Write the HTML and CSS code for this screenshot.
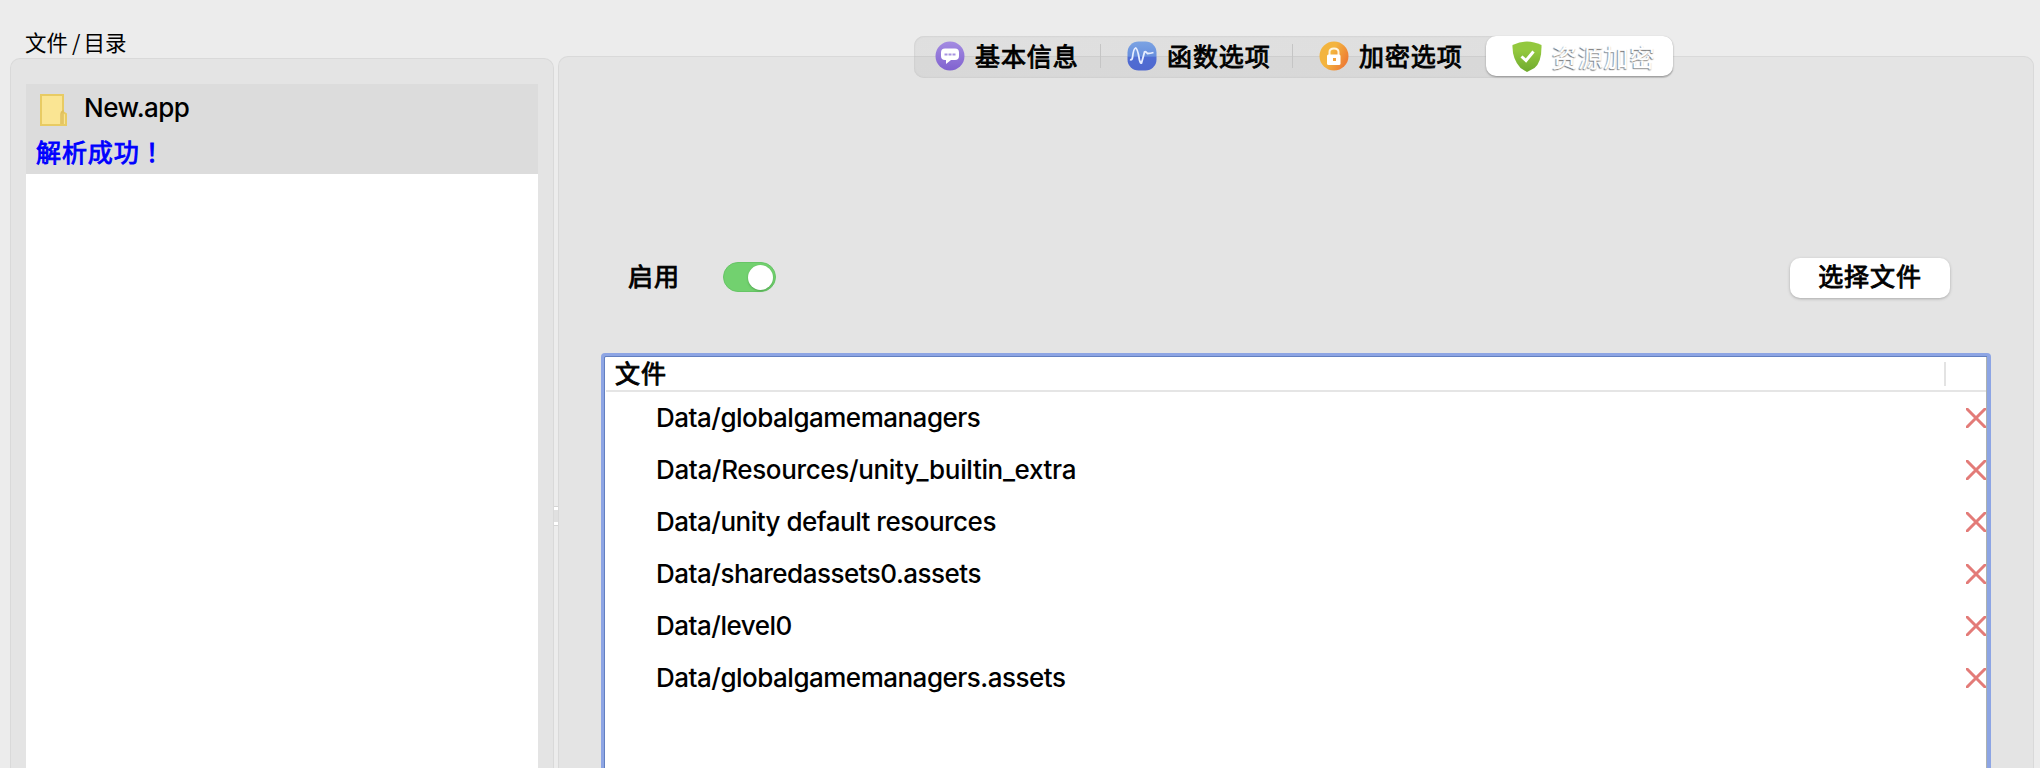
FILE: index.html
```html
<!DOCTYPE html>
<html lang="zh-CN">
<head>
<meta charset="utf-8">
<title>资源加密</title>
<link rel="stylesheet" href="styles.css">
</head>
<body>
<main class="window">
  <section class="sidebar">
    <h1 class="sidebar-title">文件<span class="slash">/</span>目录</h1>
    <div class="panel sidebar-panel">
      <div class="app-list">
        <div class="app-item">
          <div class="app-row">
            <svg class="folder" width="27" height="32" viewBox="0 0 27 32"><path d="M1 1h22v17l3 2v11H1z" fill="#fae593" stroke="#e8cb63" stroke-width="2"/><path d="M21 30V20q0-2 2-3v13" fill="#f3d67a" stroke="#dfbf5c" stroke-width="1.500"/></svg>
            <span class="app-name">New.app</span>
          </div>
          <div class="app-status">解析成功<span class="bang" lang="zh-TW">！</span></div>
        </div>
      </div>
    </div>
  </section>
  <div class="splitter"><div class="grip"></div></div>
  <section class="content">
    <nav class="tabs">
      <div class="tab tab-info">
        <svg width="30" height="30" viewBox="0 0 30 30"><defs><linearGradient id="p" x2="0" y2="1"><stop stop-color="#a48be2"/><stop offset="1" stop-color="#8062cf"/></linearGradient></defs><circle cx="15" cy="15" r="14.500" fill="url(#p)"/><path d="M10 7.500h10q4 0 4 4v3.500q0 4-4 4h-4l-5 4v-4h-1q-4 0-4-4v-3.500q0-4 4-4z" fill="#fff"/><path d="M9.500 13.500h11" stroke="#a793e0" stroke-width="1.800" stroke-dasharray="3 1"/></svg>
        <span>基本信息</span>
      </div>
      <i class="divider"></i>
      <div class="tab tab-func">
        <svg width="30" height="30" viewBox="0 0 30 30"><defs><linearGradient id="b" x2="0" y2="1"><stop stop-color="#7ba3e3"/><stop offset=".5" stop-color="#688fdd"/><stop offset=".55" stop-color="#506dd3"/><stop offset="1" stop-color="#5068cf"/></linearGradient></defs><rect x=".5" y=".5" width="29" height="29" rx="11" fill="url(#b)"/><path d="M3 18.500q2 1 2.500-2 1-9 3-9.500 2 0 4 12 1 4 2 3 2-7 3-11 1-1 3 1.500 3 0 6-1" fill="none" stroke="#e6edff" stroke-width="1.800"/></svg>
        <span>函数选项</span>
      </div>
      <i class="divider"></i>
      <div class="tab tab-crypt">
        <svg width="30" height="30" viewBox="0 0 30 30"><defs><linearGradient id="o" x2="1" y2=".5"><stop offset=".5" stop-color="#f3b43e"/><stop offset="1" stop-color="#ee7f35"/></linearGradient></defs><circle cx="15" cy="15" r="14.500" fill="url(#o)"/><path d="M10.500 14v-3q0-3.500 4.500-3.500t4.500 3.500v3" fill="none" stroke="#fff6df" stroke-width="2"/><rect x="8" y="13.500" width="13.500" height="10.500" rx="1.500" fill="#fff"/><rect x="14" y="17" width="3" height="3" fill="#f3a33b"/></svg>
        <span>加密选项</span>
      </div>
      <div class="tab tab-active">
        <svg width="30" height="31" viewBox="0 0 30 31"><defs><linearGradient id="g" x2="0" y2="1"><stop offset=".3" stop-color="#93c83e"/><stop offset="1" stop-color="#6faa2e"/></linearGradient></defs><path d="M15 .5Q22 .5 29.500 4q.5 17-7 23l-7.500 4-6.500-4Q0 18 .5 4 8 .5 15 .5z" fill="url(#g)"/><path d="M9.500 15.500l4.500 4 7.500-9" fill="none" stroke="#fff" stroke-width="3"/></svg>
        <span>资源加密</span>
      </div>
    </nav>
    <div class="panel content-panel">
      <div class="controls">
        <span class="enable">启用</span>
        <div class="toggle"><div class="knob"></div></div>
        <button class="choose">选择文件</button>
      </div>
      <div class="table">
        <div class="thead"><span>文件</span><i class="col-line"></i></div>
        <div class="row"><span>Data/globalgamemanagers</span><svg class="x" viewBox="0 0 20 20"><path d="M0 0L20 20M20 0L0 20"/></svg></div>
        <div class="row wide"><span>Data/Resources/unity_builtin_extra</span><svg class="x" viewBox="0 0 20 20"><path d="M0 0L20 20M20 0L0 20"/></svg></div>
        <div class="row"><span>Data/unity default resources</span><svg class="x" viewBox="0 0 20 20"><path d="M0 0L20 20M20 0L0 20"/></svg></div>
        <div class="row"><span>Data/sharedassets0.assets</span><svg class="x" viewBox="0 0 20 20"><path d="M0 0L20 20M20 0L0 20"/></svg></div>
        <div class="row"><span>Data/level0</span><svg class="x" viewBox="0 0 20 20"><path d="M0 0L20 20M20 0L0 20"/></svg></div>
        <div class="row"><span>Data/globalgamemanagers.assets</span><svg class="x" viewBox="0 0 20 20"><path d="M0 0L20 20M20 0L0 20"/></svg></div>
      </div>
    </div>
  </section>
</main>
</body>
</html>
```
FILE: styles.css
```css
* { box-sizing: border-box; }
body { margin: 0; background: #ececec; color: #000; font: 500 26px/36px Inter, "Noto Sans CJK SC", sans-serif; }
svg { display: block; flex: none; }
.window { display: flex; height: 768px; padding: 0 6px 0 10px; overflow: hidden; }
.sidebar { width: 544px; display: flex; flex-direction: column; }
.sidebar-title { margin: 0; height: 58px; padding: 27px 0 0 15px; font: 400 21.500px/30px "Noto Sans CJK SC", sans-serif; }
.slash { padding: 0 3px 0 4px; }
.panel { flex: 1; background: #e4e4e4; border: 1px solid #d9d9d9; border-bottom: 0; border-radius: 10px 10px 0 0; }
.sidebar-panel { padding: 25px 15px 0; }
.app-list { height: 100%; background: #fff; }
.app-item { height: 90px; background: #dcdcdc; padding: 6px 10px 0; }
.app-row { display: flex; align-items: center; height: 40px; padding-left: 4px; }
.app-name { margin: -4px 0 0 17px; letter-spacing: -.5px; }
.app-status, .tab, .enable, .choose, .thead { font: 400 25px/38px "Noto Sans CJK SC", sans-serif; letter-spacing: .9px; -webkit-text-stroke: .9px currentColor; }
.app-status { color: #00f; line-height: 42px; }
.bang { font-family: "Noto Sans CJK TC", sans-serif; }
.splitter { width: 4px; padding-top: 507px; }
.grip { height: 18px; background: #e0e0e0; border-top: 3px solid #fff; border-bottom: 3px solid #fff; box-shadow: 0 -1px #d4d4d4, 0 1px #d4d4d4; }
.content { flex: 1; display: flex; flex-direction: column; padding-top: 36px; }
.tabs { position: relative; z-index: 1; display: flex; width: 759px; height: 42px; margin: 0 0 -22px 356px; border-radius: 10px; background: linear-gradient(#0000000e, #0000000d); box-shadow: inset 0 0 2px #bdbdbd; }
.tab { display: flex; align-items: flex-start; height: 40px; white-space: nowrap; }
.tab svg { margin: 5px 10px 0 0; }
.tab-info { width: 186px; padding-left: 21px; }
.tab-func { width: 191px; padding-left: 26px; }
.tab-crypt { width: 193px; padding-left: 26px; }
.tab-active { width: 187px; padding-left: 26px; border-radius: 10px; background: #fff; box-shadow: 0 1px 2px #909090; color: #fff; text-shadow: -1px 1px 1px #777, 0 1px 1px #aaa; line-height: 40px; -webkit-text-stroke: .3px #fff; }
.divider { width: 1px; height: 24px; margin-top: 8px; background: #c5c5c5; }
.content-panel { display: flex; flex-direction: column; padding: 201px 42px 0; }
.controls { display: flex; align-items: center; height: 40px; padding: 0 41px 0 28px; }
.enable { width: 94px; margin: -6px 1px 0 -1px; }
.toggle { width: 53px; height: 30px; margin-top: -2px; padding: 3px 2px; border-radius: 15px; background: #72d16f; border: 1px solid #67c566; display: flex; align-items: center; justify-content: flex-end; }
.knob { width: 25px; height: 25px; border-radius: 50%; background: #fff; box-shadow: 0 1px 2px #34803488; }
.choose { width: 160px; height: 40px; margin-left: auto; padding: 0 0 6px; border: 0; border-radius: 10px; background: #fff; box-shadow: 0 1px 3px #aaa; line-height: 34px; color: #000; }
.table { flex: 1; margin-top: 55px; width: 1390px; border: 4px solid #8da5e4; border-top-width: 3px; border-left-width: 3px; border-bottom: 0; border-radius: 4px 4px 0 0; background: #fff; box-shadow: inset 1px 1px #6380c0, inset -1px 0 #adb2b0; padding: 1px 1px 0 2px; }
.thead { display: flex; justify-content: space-between; height: 35px; border-bottom: 2px solid #e5e5e5; padding: 0 40px 0 9px; line-height: 31px; }
.col-line { width: 2px; height: 24px; margin-top: 5px; background: #e3e3e3; }
.row { display: flex; align-items: center; justify-content: space-between; height: 52px; padding-left: 50px; letter-spacing: -.5px; }
.wide { letter-spacing: -.35px; }
.x { width: 20px; height: 20px; }
.x path { stroke: #e37b78; stroke-width: 3; }
```
